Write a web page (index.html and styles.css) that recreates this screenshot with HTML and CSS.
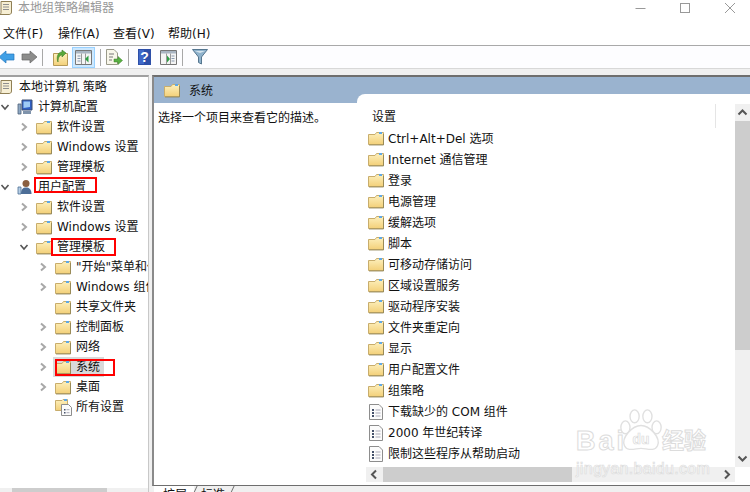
FILE: index.html
```html
<!DOCTYPE html>
<html lang="zh">
<head>
<meta charset="utf-8">
<title>本地组策略编辑器</title>
<link rel="stylesheet" href="styles.css">
</head>
<body>
<svg class="defs" aria-hidden="true">
  <defs>
    <linearGradient id="fg" x1="0" y1="0" x2="0" y2="1"><stop offset="0" stop-color="#fdf0bd"/><stop offset="1" stop-color="#f3d079"/></linearGradient>
    <symbol id="folder" viewBox="0 0 16 15">
      <path d="M.5 3.500V13.500H15.500V1.500H8.500L7 3.500Z" fill="url(#fg)" stroke="#c8ad6c"/>
      <rect x="11" y="1" width="3" height="2" fill="#5fa8e6"/>
      <path d="M1 14H15.500V3" fill="none" stroke="#8f8253" stroke-opacity=".8"/>
    </symbol>
    <symbol id="setting" viewBox="0 0 16 16">
      <path d="M1.500 .5H11L14.500 4V15.500H1.500Z" fill="#fbfbfb" stroke="#8d8d8d"/>
      <path d="M4 5h2v2H4zM4 8h2v2H4zM4 11h2v2H4z" fill="#44506a"/>
      <path d="M7.500 6h5M7.500 9h5M7.500 12h5" stroke="#a9a9b8"/>
    </symbol>
    <symbol id="open" viewBox="0 0 10 10"><path d="M3 1.500 7 5 3 8.500" fill="none" stroke="#a8a8a8" stroke-width="2"/></symbol>
    <symbol id="shut" viewBox="0 0 10 10"><path d="M1.500 3 5 7 8.500 3" fill="none" stroke="#555" stroke-width="1.600"/></symbol>
    <symbol id="scroll" viewBox="0 0 16 16">
      <path d="M3 1.500H13.500V12C13.500 14 12 14.500 11 14.500H1.500C3 14 3 13 3 12Z" fill="#f7efd4" stroke="#8f7f55"/>
      <path d="M5 4.500h6M5 7h6M5 9.500h6" stroke="#8f8f8f"/>
    </symbol>
    <symbol id="pc" viewBox="0 0 16 16">
      <path d="M5 1H15V11H5Z" fill="#2f5fc4" stroke="#3d4f70"/>
      <path d="M6.500 2.500H13V8L6.500 9Z" fill="#9ecbf5"/>
      <path d="M1 5H4V15H1Z" fill="#8fa9c4" stroke="#4b6078" stroke-width=".8"/>
      <path d="M6 12H14V15H6Z" fill="#7f93ab"/>
    </symbol>
    <symbol id="user" viewBox="0 0 16 16">
      <circle cx="9" cy="4.500" r="3.500" fill="#8a5f3f"/>
      <path d="M4 15C4 10 6 8.500 9 8.500S14.500 10 14.500 15Z" fill="#4d6e97"/>
      <path d="M1 8H4V15H1Z" fill="#b7cfe6" stroke="#4b6f96" stroke-width=".8"/>
    </symbol>
    <symbol id="allset" viewBox="0 0 18 18">
      <path d="M.5 2.500H7L8 1.500H12.500V12.500H.5Z" fill="url(#fg)" stroke="#c8ad6c"/>
      <rect x="9" y="1" width="3" height="2" fill="#5fa8e6"/>
      <path d="M6.500 6.500H13.500L16.500 9.500V17.500H6.500Z" fill="#fbfbfb" stroke="#8d8d8d"/>
      <path d="M9 11h1.500v1.500H9zM9 14h1.500v1.500H9z" fill="#44506a"/>
      <path d="M11.500 11.700h3M11.500 14.700h3" stroke="#a9a9b8"/>
    </symbol>
  </defs>
</svg>

<div class="app">
  <header class="titlebar">
    <svg class="title-icon" width="16" height="16"><use href="#scroll"/></svg>
    <span class="title-text">本地组策略编辑器</span>
    <div class="winbtns">
      <svg width="12" height="12" viewBox="0 0 12 12"><path d="M1.500 6.500H11.500" stroke="#999"/></svg>
      <svg width="12" height="12" viewBox="0 0 12 12"><rect x="1.500" y="1.500" width="9" height="9" fill="none" stroke="#999"/></svg>
      <svg width="12" height="12" viewBox="0 0 12 12"><path d="M1 1 11 11M11 1 1 11" stroke="#999"/></svg>
    </div>
  </header>

  <nav class="menubar">
    <span class="menu">文件(F)</span>
    <span class="menu">操作(A)</span>
    <span class="menu">查看(V)</span>
    <span class="menu">帮助(H)</span>
  </nav>

  <div class="toolbar">
    <svg class="tool back" width="16" height="14" viewBox="0 0 16 14"><path d="M0 7 7 1V4H15V10H7V13Z" fill="#3f9fe6" stroke="#2277bb" stroke-width=".7"/></svg>
    <svg class="tool forward" width="16" height="14" viewBox="0 0 16 14"><path d="M16 7 9 1V4H1V10H9V13Z" fill="#8c8c8c" stroke="#666" stroke-width=".7"/></svg>
    <span class="sep sep-a"></span>
    <svg class="tool up" width="15" height="17" viewBox="0 0 15 17"><path d="M.5 4.500H14.500V16.500H.5Z" fill="url(#fg)" stroke="#b69a58"/><path d="M5 13C5 8 7 6 9 6V8L13 4 9 1V3C5 3 3 8 5 13Z" fill="#5aa83a" stroke="#3d7d25" stroke-width=".6"/></svg>
    <span class="tool-on">
      <svg width="17" height="15" viewBox="0 0 17 15"><path d="M.5 .5H16.500V14.500H.5Z" fill="#f4f4f4" stroke="#777"/><path d="M1 1H16V3.500H1Z" fill="#a9b5c2"/><path d="M6.500 3.500V14M10.500 3.500V14" stroke="#999"/><path d="M2.500 6h3M2.500 8.500h3M2.500 11h3" stroke="#8a9bb0"/><path d="M10 9 13.500 5.500V12.500Z" fill="#2f9e44"/></svg>
    </span>
    <span class="sep sep-b"></span>
    <svg class="tool export" width="17" height="17" viewBox="0 0 17 17"><path d="M.5 .5H8L11.500 4V15.500H.5Z" fill="#f8f6ea" stroke="#9a9a8a"/><path d="M3 5h5M3 8h4M3 11h3" stroke="#777"/><path d="M8 10H12V7.500L16.500 11.500 12 15.500V13H8Z" fill="#58b044" stroke="#3d7d25" stroke-width=".5"/></svg>
    <span class="sep sep-c"></span>
    <svg class="tool help" width="13" height="16" viewBox="0 0 13 16"><rect width="13" height="16" fill="#2d4fa8"/><rect x="1" y="1" width="5" height="14" fill="#3f68c8"/><text x="6.500" y="13" class="help-mark">?</text></svg>
    <svg class="tool panel" width="17" height="15" viewBox="0 0 17 15"><path d="M.5 .5H16.500V14.500H.5Z" fill="#f4f4f4" stroke="#777"/><path d="M1 1H16V3.500H1Z" fill="#a9b5c2"/><path d="M6.500 3.500V14M10.500 3.500V14" stroke="#999"/><path d="M11.500 6h3M11.500 8.500h3M11.500 11h3" stroke="#8a9bb0"/><path d="M7 5.500 10 9 7 12.500Z" fill="#2f9e44"/></svg>
    <span class="sep sep-d"></span>
    <svg class="tool filter" width="16" height="16" viewBox="0 0 16 16"><path d="M.5 .5H15.500L9.500 8V15L6.500 13.500V8Z" fill="#8fb2cc" stroke="#55768f"/><path d="M3 2H13L8 4Z" fill="#d5e4ee"/></svg>
  </div>
  <div class="strip"></div>

  <main class="main">
    <aside class="tree-pane">
      <div class="tree">
        <div class="row root"><svg class="icon" width="16" height="16"><use href="#scroll"/></svg><span>本地计算机 策略</span></div>
        <div class="row l0"><svg class="chev" width="10" height="10"><use href="#shut"/></svg><svg class="icon" width="16" height="16"><use href="#pc"/></svg><span>计算机配置</span></div>
        <div class="row l1"><svg class="chev" width="10" height="10"><use href="#open"/></svg><svg class="icon" width="16" height="15"><use href="#folder"/></svg><span>软件设置</span></div>
        <div class="row l1"><svg class="chev" width="10" height="10"><use href="#open"/></svg><svg class="icon" width="16" height="15"><use href="#folder"/></svg><span>Windows 设置</span></div>
        <div class="row l1"><svg class="chev" width="10" height="10"><use href="#open"/></svg><svg class="icon" width="16" height="15"><use href="#folder"/></svg><span>管理模板</span></div>
        <div class="row l0"><svg class="chev" width="10" height="10"><use href="#shut"/></svg><svg class="icon" width="16" height="16"><use href="#user"/></svg><span class="label">用户配置<i class="mark mark-user"></i></span></div>
        <div class="row l1"><svg class="chev" width="10" height="10"><use href="#open"/></svg><svg class="icon" width="16" height="15"><use href="#folder"/></svg><span>软件设置</span></div>
        <div class="row l1"><svg class="chev" width="10" height="10"><use href="#open"/></svg><svg class="icon" width="16" height="15"><use href="#folder"/></svg><span>Windows 设置</span></div>
        <div class="row l1"><svg class="chev" width="10" height="10"><use href="#shut"/></svg><svg class="icon" width="16" height="15"><use href="#folder"/></svg><span class="label">管理模板<i class="mark mark-admin"></i></span></div>
        <div class="row l2"><svg class="chev" width="10" height="10"><use href="#open"/></svg><svg class="icon" width="16" height="15"><use href="#folder"/></svg><span>"开始"菜单和任务栏</span></div>
        <div class="row l2"><svg class="chev" width="10" height="10"><use href="#open"/></svg><svg class="icon" width="16" height="15"><use href="#folder"/></svg><span>Windows 组件</span></div>
        <div class="row l2"><span class="chev"></span><svg class="icon" width="16" height="15"><use href="#folder"/></svg><span>共享文件夹</span></div>
        <div class="row l2"><svg class="chev" width="10" height="10"><use href="#open"/></svg><svg class="icon" width="16" height="15"><use href="#folder"/></svg><span>控制面板</span></div>
        <div class="row l2"><svg class="chev" width="10" height="10"><use href="#open"/></svg><svg class="icon" width="16" height="15"><use href="#folder"/></svg><span>网络</span></div>
        <div class="row l2 selected"><svg class="chev" width="10" height="10"><use href="#open"/></svg><span class="sel"><svg class="icon" width="16" height="15"><use href="#folder"/></svg><span class="label">系统<i class="mark mark-sys"></i></span></span></div>
        <div class="row l2"><svg class="chev" width="10" height="10"><use href="#open"/></svg><svg class="icon" width="16" height="15"><use href="#folder"/></svg><span>桌面</span></div>
        <div class="row l2"><span class="chev"></span><svg class="icon" width="18" height="18"><use href="#allset"/></svg><span class="label-all">所有设置</span></div>
      </div>
      <div class="tree-scroll"><span class="tree-thumb"></span></div>
    </aside>

    <section class="details">
      <div class="pane">
        <div class="pane-head">
          <svg class="head-icon" width="16" height="15"><use href="#folder"/></svg>
          <span class="head-text">系统</span>
        </div>
        <div class="pane-body">
          <div class="desc">
            <div class="desc-tail"></div>
            <p class="desc-text">选择一个项目来查看它的描述。</p>
          </div>
          <div class="listing">
            <div class="list-top">
              <div class="list-area">
                <div class="list-head"><span>设置</span><i class="col-sep"></i></div>
                <div class="item"><svg width="16" height="15"><use href="#folder"/></svg><span>Ctrl+Alt+Del 选项</span></div>
                <div class="item"><svg width="16" height="15"><use href="#folder"/></svg><span>Internet 通信管理</span></div>
                <div class="item"><svg width="16" height="15"><use href="#folder"/></svg><span>登录</span></div>
                <div class="item"><svg width="16" height="15"><use href="#folder"/></svg><span>电源管理</span></div>
                <div class="item"><svg width="16" height="15"><use href="#folder"/></svg><span>缓解选项</span></div>
                <div class="item"><svg width="16" height="15"><use href="#folder"/></svg><span>脚本</span></div>
                <div class="item"><svg width="16" height="15"><use href="#folder"/></svg><span>可移动存储访问</span></div>
                <div class="item"><svg width="16" height="15"><use href="#folder"/></svg><span>区域设置服务</span></div>
                <div class="item"><svg width="16" height="15"><use href="#folder"/></svg><span>驱动程序安装</span></div>
                <div class="item"><svg width="16" height="15"><use href="#folder"/></svg><span>文件夹重定向</span></div>
                <div class="item"><svg width="16" height="15"><use href="#folder"/></svg><span>显示</span></div>
                <div class="item"><svg width="16" height="15"><use href="#folder"/></svg><span>用户配置文件</span></div>
                <div class="item"><svg width="16" height="15"><use href="#folder"/></svg><span>组策略</span></div>
                <div class="item"><svg width="16" height="16"><use href="#setting"/></svg><span>下载缺少的 COM 组件</span></div>
                <div class="item"><svg width="16" height="16"><use href="#setting"/></svg><span>2000 年世纪转译</span></div>
                <div class="item"><svg width="16" height="16"><use href="#setting"/></svg><span>限制这些程序从帮助启动</span></div>
              </div>
              <div class="vscroll">
                <svg width="15" height="17" viewBox="0 0 15 17"><path d="M3.500 10.500 7.500 6.500 11.500 10.500" fill="none" stroke="#555" stroke-width="2"/></svg>
                <span class="vthumb"></span>
                <svg class="v-down" width="15" height="17" viewBox="0 0 15 17"><path d="M3.500 6.500 7.500 10.500 11.500 6.500" fill="none" stroke="#555" stroke-width="2"/></svg>
              </div>
            </div>
            <div class="hscroll">
              <svg width="17" height="15" viewBox="0 0 17 15"><path d="M10 3.500 6 7.500 10 11.500" fill="none" stroke="#555" stroke-width="2"/></svg>
              <span class="hthumb"></span>
              <svg class="h-right" width="17" height="15" viewBox="0 0 17 15"><path d="M7 3.500 11 7.500 7 11.500" fill="none" stroke="#555" stroke-width="2"/></svg>
            </div>
          </div>
        </div>
      </div>
      <div class="tabs">
        <span class="tab tab-on">扩展</span>
        <span class="tab">标准</span>
      </div>
    </section>
  </main>

  <div class="watermark">
    <div class="wm-top">
      <span class="wm-bai">Bai</span>
      <svg class="wm-paw" width="44" height="44" viewBox="0 0 48 48">
        <g fill="#fff" stroke="#e0e0e0" stroke-width="1.500">
          <ellipse cx="7" cy="20" rx="5" ry="7"/>
          <ellipse cx="17" cy="8" rx="5" ry="7"/>
          <ellipse cx="31" cy="8" rx="5" ry="7"/>
          <ellipse cx="41" cy="20" rx="5" ry="7"/>
          <path d="M24 18C33 18 46 31 42 40 39 47 30 43 24 43S9 47 6 40C2 31 15 18 24 18Z"/>
        </g>
        <text x="24" y="38" class="wm-du">du</text>
      </svg>
      <span class="wm-jy">经验</span>
    </div>
    <div class="wm-url">jingyan.baidu.com</div>
  </div>
</div>
</body>
</html>
```
FILE: styles.css
```css
* { box-sizing: border-box; }
html, body { margin: 0; padding: 0; height: 100%; overflow: hidden; }
body {
  background: #fff;
  font: 12px/20px "DejaVu Sans", "Noto Sans CJK SC", sans-serif;
  color: #111;
}
.defs { position: absolute; width: 0; height: 0; }
svg { display: block; flex: none; }

.app { position: relative; width: 750px; height: 492px; display: flex; flex-direction: column; overflow: hidden; }

/* title + menu */
.titlebar { height: 22px; display: flex; align-items: center; padding: 0 0 6px 0; flex: none; }
.title-icon { margin-left: -2px; margin-right: 4px; }
.title-text { color: #999; }
.winbtns { margin-left: auto; display: flex; gap: 33px; padding-right: 14px; }
.menubar { display: flex; padding-left: 3px; gap: 18px; flex: none; border-bottom: 1px solid #a9a9a9; height: 24px; align-items: center; }
.menu { width: 37px; white-space: nowrap; }

/* toolbar */
.toolbar { height: 23px; display: flex; align-items: center; background: #fdfdff; flex: none; border-bottom: 1px solid #d8d8d8; }
.back { margin-left: -1px; }
.forward { margin-left: 6px; }
.sep { width: 1px; height: 17px; background: #a8a8a8; }
.sep-a { margin-left: 5px; }
.up { margin-left: 10px; }
.tool-on { width: 23px; height: 21px; margin-left: 4px; display: flex; align-items: center; justify-content: center; background: #cce8ff; border: 1px solid #99d1ff; }
.sep-b { margin-left: 5px; }
.export { margin-left: 5px; }
.sep-c { margin-left: 5px; }
.help { margin-left: 9px; }
.panel { margin-left: 9px; }
.sep-d { margin-left: 5px; }
.filter { margin-left: 9px; }
.help-mark { font: bold 14px "Liberation Sans", sans-serif; fill: #fff; text-anchor: middle; }
.strip { height: 6px; background: #f0f0f0; flex: none; }

/* main split */
.main { flex: 1; min-height: 0; display: flex; background: #f0f0f0; }

.tree-pane { width: 149px; flex: none; display: flex; flex-direction: column; border-top: 2px solid #a0a0a0; border-right: 1px solid #c8c8c8; background: #fff; height: 417px; }
.tree { flex: 1; min-height: 0; overflow: hidden; white-space: nowrap; }
.row { height: 20px; display: flex; align-items: center; }
.row > span:last-child { white-space: nowrap; }
.chev { width: 10px; height: 10px; margin-left: 1px; margin-right: 7px; }
.icon { margin-right: 4px; }
.root { margin-left: -2px; }
.root .icon { margin-right: 5px; }
.l1 { padding-left: 18px; }
.l2 { padding-left: 37px; }
.l0 .chev { margin-left: 0; }
.l0 .icon { margin-right: 5px; }
.l1 .icon, .l2 .icon { margin-right: 5px; }
.label { position: relative; }
.label-all { margin-left: -2px; }
.mark { position: absolute; border: 2px solid #f00; pointer-events: none; }
.mark-user { left: -4px; top: 0; width: 63px; height: 16px; }
.mark-admin { left: -6px; top: 1px; width: 65px; height: 18px; }
.mark-sys { left: -21px; top: 2px; width: 60px; height: 17px; }
.sel { display: flex; align-items: center; width: 51px; height: 20px; background: #d9d9d9; margin-left: -2px; padding-left: 2px; }
.tree-scroll { height: 4px; background: #f0f0f0; flex: none; padding-left: 12px; }
.tree-thumb { display: block; width: 95px; height: 4px; background: #cdcdcd; }

.details { flex: 1; min-width: 0; display: flex; flex-direction: column; padding-left: 3px; height: 417px; }
.pane { height: 411px; flex: none; display: flex; flex-direction: column; background: #fff; border-top: 2px solid #6e6e6e; border-left: 2px solid #8a8a8a; border-bottom: 1px solid #6e6e6e; }
.pane-head { height: 17px; flex: none; display: flex; align-items: flex-start; gap: 9px; padding-left: 10px; background: #9ab3cf; position: relative; z-index: 1; }
.head-icon { margin-top: 6px; }
.head-text { margin-top: 4px; }
.pane-body { flex: 1; min-height: 0; display: flex; background: linear-gradient(#9ab3cf 9px, #fff 9px); }
.desc { width: 203px; flex: none; background: #fff; }
.desc-tail { height: 9px; background: #9ab3cf; }
.desc-text { margin: 5px 0 0 4px; }
.listing { flex: 1; min-width: 0; display: flex; flex-direction: column; background: #fff; border-top-left-radius: 8px; }
.list-top { flex: 1; min-height: 0; display: flex; }
.list-area { flex: 1; min-width: 0; overflow: hidden; padding-top: 13px; padding-left: 11px; }
.list-head { height: 21px; position: relative; padding-left: 4px; }
.col-sep { position: absolute; left: 347px; top: -3px; width: 1px; height: 24px; background: #e5e5e5; }
.item { height: 21px; display: flex; align-items: center; gap: 4px; white-space: nowrap; }
.vscroll { width: 15px; flex: none; margin-top: 10px; background: #f0f0f0; display: flex; flex-direction: column; }
.vthumb { display: block; height: 229px; background: #cdcdcd; }
.v-down { margin-top: auto; }
.hscroll { height: 15px; flex: none; margin-left: 9px; margin-right: 15px; margin-bottom: 3px; background: #f0f0f0; display: flex; align-items: center; }
.hthumb { display: block; width: 189px; height: 15px; background: #cdcdcd; }
.h-right { margin-left: auto; }

.tabs { height: 6px; display: flex; padding-left: 2px; flex: none; overflow: hidden; align-items: flex-start; background: #f0f0f0; }
.tab { position: relative; width: 37px; height: 24px; padding-left: 7px; line-height: 18px; flex: none; }
.tab::after { content: ""; position: absolute; right: 2px; top: 0; width: 1px; height: 24px; background: #6e6e6e; transform: skewX(-25deg); }
.tab-on { background: #fff; width: 40px; padding-left: 9px; }

/* watermark */
.watermark { position: absolute; left: 576px; top: 409px; width: 136px; pointer-events: none; font-family: "Liberation Sans", "Noto Sans CJK SC", sans-serif; }
.wm-top { display: flex; align-items: flex-end; height: 44px; }
.wm-bai, .wm-jy { color: #fff; -webkit-text-stroke: 1px #dcdcdc; font-weight: bold; }
.wm-bai { font-size: 27px; line-height: 24px; width: 45px; letter-spacing: 3px; flex: none; }
.wm-paw { margin-left: -2px; }
.wm-du { font: bold 15px "Liberation Sans", sans-serif; fill: #fff; stroke: #dcdcdc; stroke-width: .8; text-anchor: middle; }
.wm-jy { font-size: 22px; line-height: 24px; margin-left: -1px; white-space: nowrap; }
.wm-url { color: #fff; -webkit-text-stroke: .7px #dcdcdc; font-size: 16px; line-height: 16px; margin-top: 8px; white-space: nowrap; letter-spacing: .3px; }
```
